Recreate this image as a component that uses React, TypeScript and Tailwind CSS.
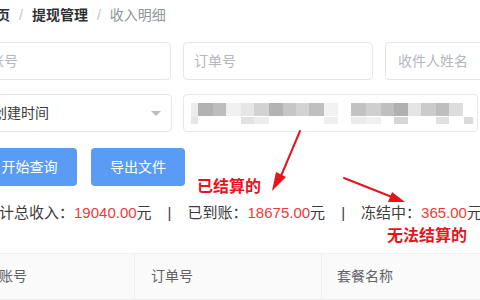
import React from 'react';

const mosaicTop: [number, number, string][] = [
    [197, 212, '#b2b2b2'],
    [212, 225, '#bdbdbd'],
    [225, 240, '#f0f0f0'],
    [240, 253, '#e6e6e6'],
    [253, 268, '#d2d2d2'],
    [268, 282, '#b3b3b3'],
    [282, 295, '#c6c6c6'],
    [295, 308, '#d3d3d3'],
    [308, 323, '#bfbfbf'],
    [323, 337, '#f2f2f2'],
    [350, 365, '#c2c2c2'],
    [365, 380, '#cfcfcf'],
    [380, 393, '#bfbfbf'],
    [393, 407, '#b0b0b0'],
    [407, 420, '#e5e5e5'],
    [420, 435, '#cbcbcb'],
    [435, 448, '#bebebe'],
    [448, 462, '#dddddd'],
];

const mosaicLow: [number, number, string][] = [
    [190, 197, '#e6e6e6'],
    [240, 253, '#e2e2e2'],
    [253, 268, '#ececec'],
    [323, 337, '#efefef'],
    [350, 365, '#ebebeb'],
    [365, 380, '#f0f0f0'],
    [393, 407, '#d6d6d6'],
    [435, 448, '#e0e0e0'],
    [463, 472, '#dadada'],
];

function Mosaic() {
    // blurred date range (pixelated in the screenshot)
    return (
        <svg width="295" height="38" className="block">
            <rect x={7} y={8} width={7} height={21} fill="#ececec" />
            {mosaicTop.map(([a, b, c], i) => (
                <rect key={i} x={a - 183} y={8} width={b - a} height={13} fill={c} />
            ))}
            {mosaicLow.map(([a, b, c], i) => (
                <rect key={'l' + i} x={a - 183} y={22} width={b - a} height={7} fill={c} />
            ))}
        </svg>
    );
}

export default function App() {
    return (
        <div className="relative w-[480px] h-[300px] overflow-hidden bg-white font-['Liberation_Sans','Noto_Sans_CJK_SC',sans-serif]">
            <div className="ml-[-20px] w-[700px] flex flex-col">
                {/* breadcrumb */}
                <div className="mt-[5px] ml-[2px] h-[20px] flex items-center text-[14px] leading-[20px]">
                    <span className="font-bold text-[#303133]">首页</span>
                    <span className="mx-[9px] text-[#c0c4cc]">/</span>
                    <span className="font-bold text-[#303133]">提现管理</span>
                    <span className="mx-[9px] text-[#c0c4cc]">/</span>
                    <span className="text-[#909399]">收入明细</span>
                </div>

                {/* filters row 1 */}
                <div className="mt-[17px] flex gap-[12px]">
                    <div className="w-[191px] h-[38px] border border-[#e4e6eb] rounded-[4px] px-[9px] flex items-center text-[14px] text-[#b4b7bd]">账号</div>
                    <div className="w-[190px] h-[38px] border border-[#e4e6eb] rounded-[4px] px-[10px] flex items-center text-[14px] text-[#b4b7bd]">订单号</div>
                    <div className="w-[190px] h-[38px] border border-[#e4e6eb] rounded-[4px] px-[12px] flex items-center text-[14px] text-[#b4b7bd]">收件人姓名</div>
                </div>

                {/* filters row 2 */}
                <div className="mt-[14px] flex gap-[11px]">
                    <div className="w-[192px] h-[38px] border border-[#e4e6eb] rounded-[4px] pl-[12px] pr-[10px] flex items-center justify-between text-[14px] text-[#3a3a3a]">
                        <span>创建时间</span>
                        <svg width="10" height="5" viewBox="0 0 10 5">
                            <path d="M0 0 L10 0 L5 5 Z" fill="#bcbcbc" />
                        </svg>
                    </div>
                    <div className="w-[295px] h-[38px] border border-[#e8e9ec] rounded-[4px] overflow-hidden">
                        <Mosaic />
                    </div>
                </div>

                {/* actions */}
                <div className="mt-[16px] ml-[2px] flex gap-[14px]">
                    <button className="w-[95px] h-[38px] rounded-[4px] bg-[#5a9bf6] text-white text-[14px]">开始查询</button>
                    <button className="w-[94px] h-[38px] rounded-[4px] bg-[#5a9bf6] text-white text-[14px]">导出文件</button>
                </div>

                {/* summary */}
                <div className="mt-[17px] ml-[4px] h-[20px] flex items-center text-[15px] leading-[20px] text-[#3c3c3c] whitespace-nowrap">
                    <span>累计总收入：</span>
                    <span className="text-[#f03a3a]">19040.00</span>
                    <span>元</span>
                    <span className="mx-[16px]">|</span>
                    <span>已到账：</span>
                    <span className="text-[#f03a3a]">18675.00</span>
                    <span>元</span>
                    <span className="mx-[16px]">|</span>
                    <span>冻结中：</span>
                    <span className="text-[#f03a3a]">365.00</span>
                    <span>元</span>
                </div>

                {/* table header */}
                <div className="mt-[30px] ml-[3px] h-[47px] flex bg-[#fafafa] border-t border-[#f2f2f2] border-b border-b-[#eeeeee] text-[14px] text-[#606266]">
                    <div className="w-[152px] px-[16px] flex items-center border-r border-[#efefef]">账号</div>
                    <div className="w-[187px] px-[16px] flex items-center border-r border-[#efefef]">订单号</div>
                    <div className="w-[200px] px-[15px] flex items-center">套餐名称</div>
                </div>
            </div>

            {/* red annotations */}
            <svg className="absolute inset-0 pointer-events-none" width="480" height="300">
                <path d="M300 131 L281 176" stroke="#e8141c" strokeWidth="2" strokeLinecap="round" />
                <path d="M272 191 L276 172 L286 177 Z" fill="#e8141c" />
                <path d="M344 178 L392 197" stroke="#e8141c" strokeWidth="2" strokeLinecap="round" />
                <path d="M405 202 L388 202 L392 192 Z" fill="#e8141c" />
            </svg>
            <div className="absolute left-[197px] top-[177px] text-[16px] leading-[20px] font-bold text-[#e8141c]">已结算的</div>
            <div className="absolute left-[387px] top-[226px] text-[16px] leading-[20px] font-bold text-[#e8141c]">无法结算的</div>
        </div>
    );
}
